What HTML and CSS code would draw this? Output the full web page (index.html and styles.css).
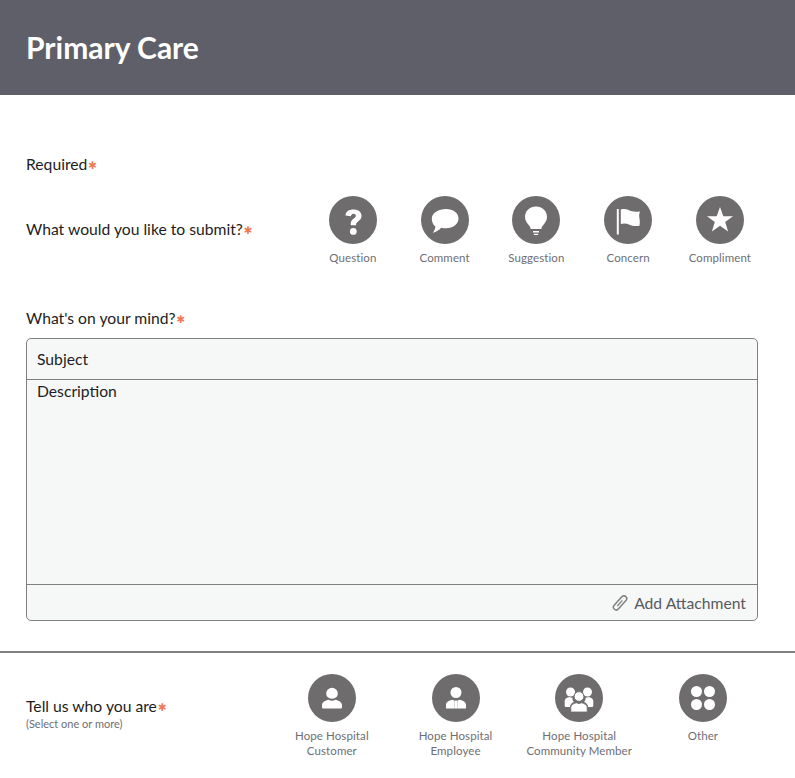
FILE: index.html
```html
<!DOCTYPE html>
<html lang="en">
<head>
    <meta charset="UTF-8">
    <meta name="viewport" content="width=device-width, initial-scale=1.0">
    <title>Primary Care</title>
    <link rel="stylesheet" href="styles.css">
</head>
<body>
    <header class="banner">
        <h1>Primary Care</h1>
    </header>

    <main class="form">
        <p class="required">Required<span class="star">✱</span></p>

        <div class="submit-row">
            <label class="row-label">What would you like to submit?<span class="star">✱</span></label>
            <div class="choices">
                <div class="choice">
                    <span class="circle">
                        <svg viewBox="0 0 48 48"><path d="M16.500 19.500C16.700 15.500 19.800 13.500 24.500 13.500c5 0 8 2.500 8 6.300 0 2.900-1.500 4.300-3.400 5.600-1.500 1-2 1.700-2 3.100v.8h-5.400v-1.200c0-2.600.9-4 2.800-5.300 1.600-1.100 2.300-1.800 2.300-3 0-1.300-.9-2.100-2.300-2.100-1.500 0-2.400 1-2.500 2.600z" fill="#fff"/><circle cx="24.300" cy="35.400" r="3.400" fill="#fff"/></svg>
                    </span>
                    <span class="caption">Question</span>
                </div>
                <div class="choice">
                    <span class="circle">
                        <svg viewBox="0 0 48 48"><path d="M25 13c7.200 0 12.500 4 12.500 9.500 0 5.600-5.600 9.800-12.500 9.800-1.700 0-3.300-.2-4.800-.6-2.100 2.400-4.900 4.200-8.400 5.100 1.500-2 2.400-4.100 2.600-6.300C11.900 28.600 10.800 25.800 10.800 22.500 10.800 17 17.700 13 25 13z" fill="#fff"/></svg>
                    </span>
                    <span class="caption">Comment</span>
                </div>
                <div class="choice">
                    <span class="circle">
                        <svg viewBox="0 0 48 48"><path d="M24 10.500c6.200 0 11 4.500 11 10.300 0 3.200-1.300 5.300-2.900 7.300-1.300 1.600-2.500 3-2.800 5H18.700c-.3-2-1.500-3.400-2.800-5-1.600-2-2.900-4.100-2.900-7.300 0-5.800 4.800-10.300 11-10.300z" fill="#fff"/><path d="M21 35h6v1.400h-6zM21.800 37.700h4.400v1.400h-4.400z" fill="#fff"/></svg>
                    </span>
                    <span class="caption">Suggestion</span>
                </div>
                <div class="choice">
                    <span class="circle">
                        <svg viewBox="0 0 48 48"><path d="M12.800 13h2v25.500h-2z" fill="#fff"/><path d="M16.800 13.500c2.700-.8 5.200-.6 7.700.5 2.900 1.300 6.300 2.300 11.500 1.400-.9 2.200-1 4.300-.6 6.300.4 2.700.6 5 .1 8-3.900.8-7.100.4-10-.9-3-1.300-5.700-1.600-8.700-.7z" fill="#fff"/></svg>
                    </span>
                    <span class="caption">Concern</span>
                </div>
                <div class="choice">
                    <span class="circle">
                        <svg viewBox="0 0 48 48"><path d="M24 11l3.300 9.300h9.700l-7.800 5.800 2.900 9.400-8.100-5.700-8.100 5.700 2.900-9.400-7.800-5.800h9.700z" fill="#fff"/></svg>
                    </span>
                    <span class="caption">Compliment</span>
                </div>
            </div>
        </div>

        <p class="mind-label">What's on your mind?<span class="star">✱</span></p>
        <div class="message">
            <div class="subject">Subject</div>
            <div class="description">Description</div>
            <div class="attach">
                <svg class="clip" viewBox="0 0 16 16"><rect x="5.200" y="-.6" width="5.600" height="17" rx="2.800" transform="rotate(42 8 8)" fill="none" stroke="#808080" stroke-width="1.500"/><path d="M8 4.500v7.500" transform="rotate(42 8 8)" stroke="#808080" stroke-width="1.300"/></svg>
                <span>Add Attachment</span>
            </div>
        </div>
    </main>

    <section class="who">
        <div class="who-label">
            <div class="row-label">Tell us who you are<span class="star">✱</span></div>
            <div class="hint">(Select one or more)</div>
        </div>
        <div class="who-choices">
            <div class="choice">
                <span class="circle">
                    <svg viewBox="0 0 48 48"><circle cx="24" cy="19.500" r="5.800" fill="#fff"/><path d="M19.800 23.500c2.200 2.300 6.200 2.300 8.400 0" fill="none" stroke="#6e6c6c" stroke-width="1"/><path d="M14 33.500v-2.500c0-3 3.600-4.500 6.500-5.200 1.100.6 2.200.9 3.500.9s2.400-.3 3.500-.9c2.900.7 6.500 2.200 6.500 5.200v2.500c0 .5-.4.900-.9.900H14.900c-.5 0-.9-.4-.9-.9z" fill="#fff"/></svg>
                </span>
                <span class="caption">Hope Hospital<br>Customer</span>
            </div>
            <div class="choice">
                <span class="circle">
                    <svg viewBox="0 0 48 48"><circle cx="24" cy="18.500" r="5.500" fill="#fff"/><path d="M14 34.500v-3.700c0-2.700 2.900-4.200 6.500-5l2.300 1-.9 7.700zM34 34.500v-3.700c0-2.700-2.900-4.200-6.500-5l-2.300 1 .9 7.700zM23.100 26.500h1.800l1 8h-3.800z" fill="#fff"/></svg>
                </span>
                <span class="caption">Hope Hospital<br>Employee</span>
            </div>
            <div class="choice">
                <span class="circle">
                    <svg viewBox="0 0 48 48"><circle cx="15.500" cy="18" r="4.500" fill="#fff"/><circle cx="32.500" cy="18" r="4.500" fill="#fff"/><path d="M9.700 31.500v-4.500c0-2.300 2.700-3.600 5-4 .9.500 1.800.7 2.700.6-.2 2.500 1 4 1.500 4.300-2.300 1-3.800 2.500-4 5.100h-3.700c-.8 0-1.500-.3-1.500-1.500zM38.300 31.500v-4.500c0-2.300-2.700-3.600-5-4-.9.500-1.800.7-2.700.6.200 2.500-1 4-1.500 4.300 2.300 1 3.800 2.500 4 5.100h3.700c.8 0 1.500-.3 1.500-1.500z" fill="#fff"/><circle cx="24" cy="22.500" r="4.900" fill="#fff" stroke="#6e6c6c" stroke-width="1"/><path d="M15.800 37.300v-4c0-2.500 3.200-4 5.700-4.500.8.500 1.600.7 2.500.7s1.700-.2 2.500-.7c2.500.5 5.700 2 5.700 4.500v4c0 .4-.3.700-.7.700H16.500c-.4 0-.7-.3-.7-.7z" fill="#fff" stroke="#6e6c6c" stroke-width=".8"/></svg>
                </span>
                <span class="caption">Hope Hospital<br>Community Member</span>
            </div>
            <div class="choice">
                <span class="circle">
                    <svg viewBox="0 0 48 48"><circle cx="17.500" cy="17.500" r="5.500" fill="#fff"/><circle cx="30.500" cy="17.500" r="5.500" fill="#fff"/><circle cx="17.500" cy="30.500" r="5.500" fill="#fff"/><circle cx="30.500" cy="30.500" r="5.500" fill="#fff"/></svg>
                </span>
                <span class="caption">Other</span>
            </div>
        </div>
    </section>
</body>
</html>
```

FILE: styles.css
```css
html, body {
    height: 778px;
    overflow: hidden;
}
body {
    font-family: Lato, Arial, sans-serif;
    font-size: 15.700px;
    margin: 0;
    background-color: #fff;
    color: #1d1d22;
}
.banner {
    background-color: #5f5f69;
    height: 95px;
    padding: 0 26px;
    display: flex;
    align-items: center;
}
h1 {
    margin: 0 0 2px;
    color: #fff;
    font-size: 30px;
    font-weight: 700;
}
.form {
    padding: 58px 37px 0 26px;
}
.required {
    margin: 0;
    line-height: 22px;
}
.star {
    color: #ee7b58;
    margin-left: 1px;
    font-family: "DejaVu Sans", sans-serif;
    font-size: 10.500px;
    vertical-align: 1px;
}
.submit-row {
    display: flex;
    align-items: center;
    margin-top: 20px;
    height: 70px;
}
.row-label {
    line-height: 20px;
}
.submit-row .row-label {
    margin-top: -4px;
}
.choices {
    position: absolute;
    left: 307px;
    top: 196px;
    display: flex;
}
.choice {
    display: flex;
    flex-direction: column;
    align-items: center;
}
.choices .choice {
    width: 91.750px;
}
.circle {
    width: 48px;
    height: 48px;
    border-radius: 50%;
    background-color: #6e6c6c;
    display: block;
}
.circle svg {
    display: block;
    width: 48px;
    height: 48px;
}
.caption {
    margin-top: 6px;
    font-size: 11.500px;
    letter-spacing: 0.1px;
    line-height: 15px;
    color: #6e6e74;
    text-align: center;
    white-space: nowrap;
}
.mind-label {
    margin: 41px 0 0;
    line-height: 22px;
}
.message {
    margin-top: 8px;
    height: 283px;
    box-sizing: border-box;
    border: 1px solid #808080;
    border-radius: 5px;
    background-color: #f6f8f7;
    display: flex;
    flex-direction: column;
}
.subject {
    height: 40px;
    line-height: 40px;
    padding: 0 10px;
    border-bottom: 1px solid #808080;
}
.description {
    flex: 1;
    padding: 1px 10px;
    line-height: 20px;
    border-bottom: 1px solid #808080;
}
.attach {
    height: 35px;
    padding: 0 11px;
    display: flex;
    align-items: center;
    justify-content: flex-end;
    gap: 6px;
    color: #58585f;
}
.clip {
    width: 16px;
    height: 16px;
}
.who {
    margin-top: 30px;
    border-top: 2px solid #808080;
    padding: 21px 0 0 26px;
    display: flex;
}
.who-label {
    width: 244px;
    padding-top: 22px;
}
.hint {
    font-size: 11px;
    line-height: 13px;
    color: #6e6e74;
}
.who-choices {
    display: flex;
}
.who-choices .choice {
    width: 123.700px;
}
```
